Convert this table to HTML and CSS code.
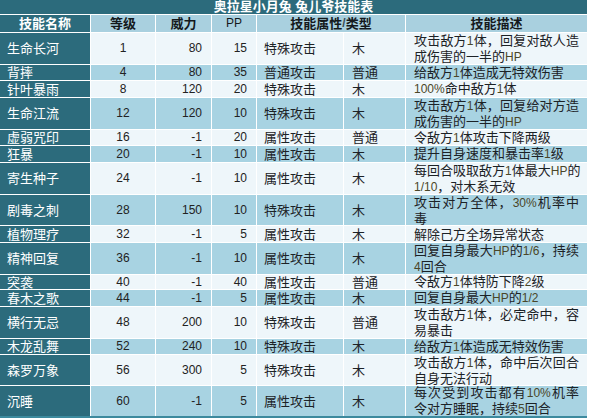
FILE: index.html
```html
<!DOCTYPE html>
<html lang="zh-CN">
<head>
<meta charset="utf-8">
<title>奥拉星小月兔 兔儿爷技能表</title>
<link rel="stylesheet" href="styles.css">
</head>
<body>
<div class="sheet">
  <div class="title">奥拉星小月兔 兔儿爷技能表</div>

  <div class="row head">
    <div class="cell name">技能名称</div>
    <div class="cell ctr">等级</div>
    <div class="cell ctr">威力</div>
    <div class="cell ctr pp">PP</div>
    <div class="cell ctr span2">技能属性<span class="slash">/</span>类型</div>
    <div class="cell ctr">技能描述</div>
  </div>

  <div class="row light">
    <div class="cell name">生命长河</div><div class="cell ctr num">1</div><div class="cell rt num">80</div><div class="cell rt num">15</div><div class="cell attr">特殊攻击</div><div class="cell kind">木</div>
    <div class="cell desc"><span class="fill">攻击敌方<i>1</i>体，回复对敌人造</span><span>成伤害的一半的<i>HP</i></span></div>
  </div>
  <div class="row blue">
    <div class="cell name">背摔</div><div class="cell ctr num">4</div><div class="cell rt num">80</div><div class="cell rt num">35</div><div class="cell attr">普通攻击</div><div class="cell kind">普通</div>
    <div class="cell desc"><span>给敌方<i>1</i>体造成无特效伤害</span></div>
  </div>
  <div class="row light">
    <div class="cell name">针叶暴雨</div><div class="cell ctr num">8</div><div class="cell rt num">120</div><div class="cell rt num">20</div><div class="cell attr">特殊攻击</div><div class="cell kind">木</div>
    <div class="cell desc"><span><i>100%</i>命中敌方<i>1</i>体</span></div>
  </div>
  <div class="row blue">
    <div class="cell name">生命江流</div><div class="cell ctr num">12</div><div class="cell rt num">120</div><div class="cell rt num">10</div><div class="cell attr">特殊攻击</div><div class="cell kind">木</div>
    <div class="cell desc"><span class="fill">攻击敌方<i>1</i>体，回复给对方造</span><span>成伤害的一半的<i>HP</i></span></div>
  </div>
  <div class="row light">
    <div class="cell name">虚弱咒印</div><div class="cell ctr num">16</div><div class="cell rt num">-1</div><div class="cell rt num">20</div><div class="cell attr">属性攻击</div><div class="cell kind">普通</div>
    <div class="cell desc"><span>令敌方<i>1</i>体攻击下降两级</span></div>
  </div>
  <div class="row blue">
    <div class="cell name">狂暴</div><div class="cell ctr num">20</div><div class="cell rt num">-1</div><div class="cell rt num">10</div><div class="cell attr">属性攻击</div><div class="cell kind">木</div>
    <div class="cell desc"><span>提升自身速度和暴击率<i>1</i>级</span></div>
  </div>
  <div class="row light">
    <div class="cell name">寄生种子</div><div class="cell ctr num">24</div><div class="cell rt num">-1</div><div class="cell rt num">10</div><div class="cell attr">属性攻击</div><div class="cell kind">木</div>
    <div class="cell desc"><span class="fill">每回合吸取敌方<i>1</i>体最大<i>HP</i>的</span><span><i>1/10</i>，对木系无效</span></div>
  </div>
  <div class="row blue">
    <div class="cell name">剧毒之刺</div><div class="cell ctr num">28</div><div class="cell rt num">150</div><div class="cell rt num">10</div><div class="cell attr">特殊攻击</div><div class="cell kind">木</div>
    <div class="cell desc"><span class="fill">攻击对方全体，<i>30%</i>机率中</span><span>毒</span></div>
  </div>
  <div class="row light">
    <div class="cell name">植物理疗</div><div class="cell ctr num">32</div><div class="cell rt num">-1</div><div class="cell rt num">5</div><div class="cell attr">属性攻击</div><div class="cell kind">木</div>
    <div class="cell desc"><span>解除己方全场异常状态</span></div>
  </div>
  <div class="row blue">
    <div class="cell name">精神回复</div><div class="cell ctr num">36</div><div class="cell rt num">-1</div><div class="cell rt num">10</div><div class="cell attr">属性攻击</div><div class="cell kind">木</div>
    <div class="cell desc"><span class="fill">回复自身最大<i>HP</i>的<i>1/6</i>，持续</span><span><i>4</i>回合</span></div>
  </div>
  <div class="row light">
    <div class="cell name">突袭</div><div class="cell ctr num">40</div><div class="cell rt num">-1</div><div class="cell rt num">40</div><div class="cell attr">属性攻击</div><div class="cell kind">普通</div>
    <div class="cell desc"><span>令敌方<i>1</i>体特防下降<i>2</i>级</span></div>
  </div>
  <div class="row blue">
    <div class="cell name">春木之歌</div><div class="cell ctr num">44</div><div class="cell rt num">-1</div><div class="cell rt num">5</div><div class="cell attr">属性攻击</div><div class="cell kind">木</div>
    <div class="cell desc"><span>回复自身最大<i>HP</i>的<i>1/2</i></span></div>
  </div>
  <div class="row light">
    <div class="cell name">横行无忌</div><div class="cell ctr num">48</div><div class="cell rt num">200</div><div class="cell rt num">10</div><div class="cell attr">特殊攻击</div><div class="cell kind">普通</div>
    <div class="cell desc"><span class="fill">攻击敌方<i>1</i>体，必定命中，容</span><span>易暴击</span></div>
  </div>
  <div class="row blue">
    <div class="cell name">木龙乱舞</div><div class="cell ctr num">52</div><div class="cell rt num">240</div><div class="cell rt num">10</div><div class="cell attr">特殊攻击</div><div class="cell kind">木</div>
    <div class="cell desc"><span>给敌方<i>1</i>体造成无特效伤害</span></div>
  </div>
  <div class="row light">
    <div class="cell name">森罗万象</div><div class="cell ctr num">56</div><div class="cell rt num">300</div><div class="cell rt num">5</div><div class="cell attr">特殊攻击</div><div class="cell kind">木</div>
    <div class="cell desc"><span class="fill">攻击敌方<i>1</i>体，命中后次回合</span><span>自身无法行动</span></div>
  </div>
  <div class="row blue">
    <div class="cell name">沉睡</div><div class="cell ctr num">60</div><div class="cell rt num">-1</div><div class="cell rt num">5</div><div class="cell attr">属性攻击</div><div class="cell kind">木</div>
    <div class="cell desc"><span class="fill">每次受到攻击都有<i>10%</i>机率</span><span>令对方睡眠，持续<i>5</i>回合</span></div>
  </div>
</div>
</body>
</html>
```

FILE: styles.css
```css
html, body {
  margin: 0;
  padding: 0;
  background: #ffffff;
}

.sheet {
  display: grid;
  width: 587px;
  grid-template-columns: 90px 64px 55px 44px 86px 61px 181px;
  grid-template-rows: 14px 17px 31px 15px 16px 31px 15px 16px 31px 30px 16px 31px 14px 16px 31px 15px 30px 30px;
  gap: 1px;
  background: #ffffff;
  border-bottom: 2px solid #3d8a9e;
  font-family: "Liberation Sans", "Noto Sans CJK SC", sans-serif;
  font-size: 13px;
  line-height: 15px;
  color: #1c2226;
}

.row {
  display: contents;
}

.title {
  grid-column: 1 / -1;
  background: #2c6b7c;
  color: #ffffff;
  font-weight: bold;
  text-align: center;
  line-height: 14px;
  font-size: 13px;
}

.cell {
  display: flex;
  flex-direction: column;
  justify-content: center;
  align-items: flex-start;
  padding: 0 8px;
  overflow: hidden;
  white-space: nowrap;
}

.ctr {
  align-items: center;
  padding: 0;
}

.rt {
  align-items: flex-end;
  padding: 0 9px 0 0;
}

.num {
  font-size: 12px;
  color: #222222;
}

.head .cell {
  background: #a9d0df;
  font-weight: bold;
  color: #14191c;
  line-height: 17px;
}

.head .pp {
  font-weight: normal;
  font-size: 12px;
}

.head .span2 {
  grid-column: span 2;
  flex-direction: row;
  justify-content: center;
}

.slash {
  color: #3b4e56;
  font-weight: bold;
  font-size: 12px;
}

.light .cell {
  background: #eef6fa;
}

.blue .cell {
  background: #a8d3e2;
}

.row .name,
.head .name {
  background: #2c6b7c;
  color: #ffffff;
  padding-left: 7px;
}

.head .name {
  align-items: center;
  padding: 0;
  color: #ffffff;
}

.attr {
  padding-left: 7px;
}

.kind {
  padding-left: 8px;
}

.desc {
  align-items: stretch;
  padding: 0 8px 0 8px;
}

.desc span {
  display: block;
}

.desc .fill {
  text-align: justify;
  text-align-last: justify;
}

.desc i {
  font-style: normal;
  font-size: 12px;
  color: #4a4628;
}
```
